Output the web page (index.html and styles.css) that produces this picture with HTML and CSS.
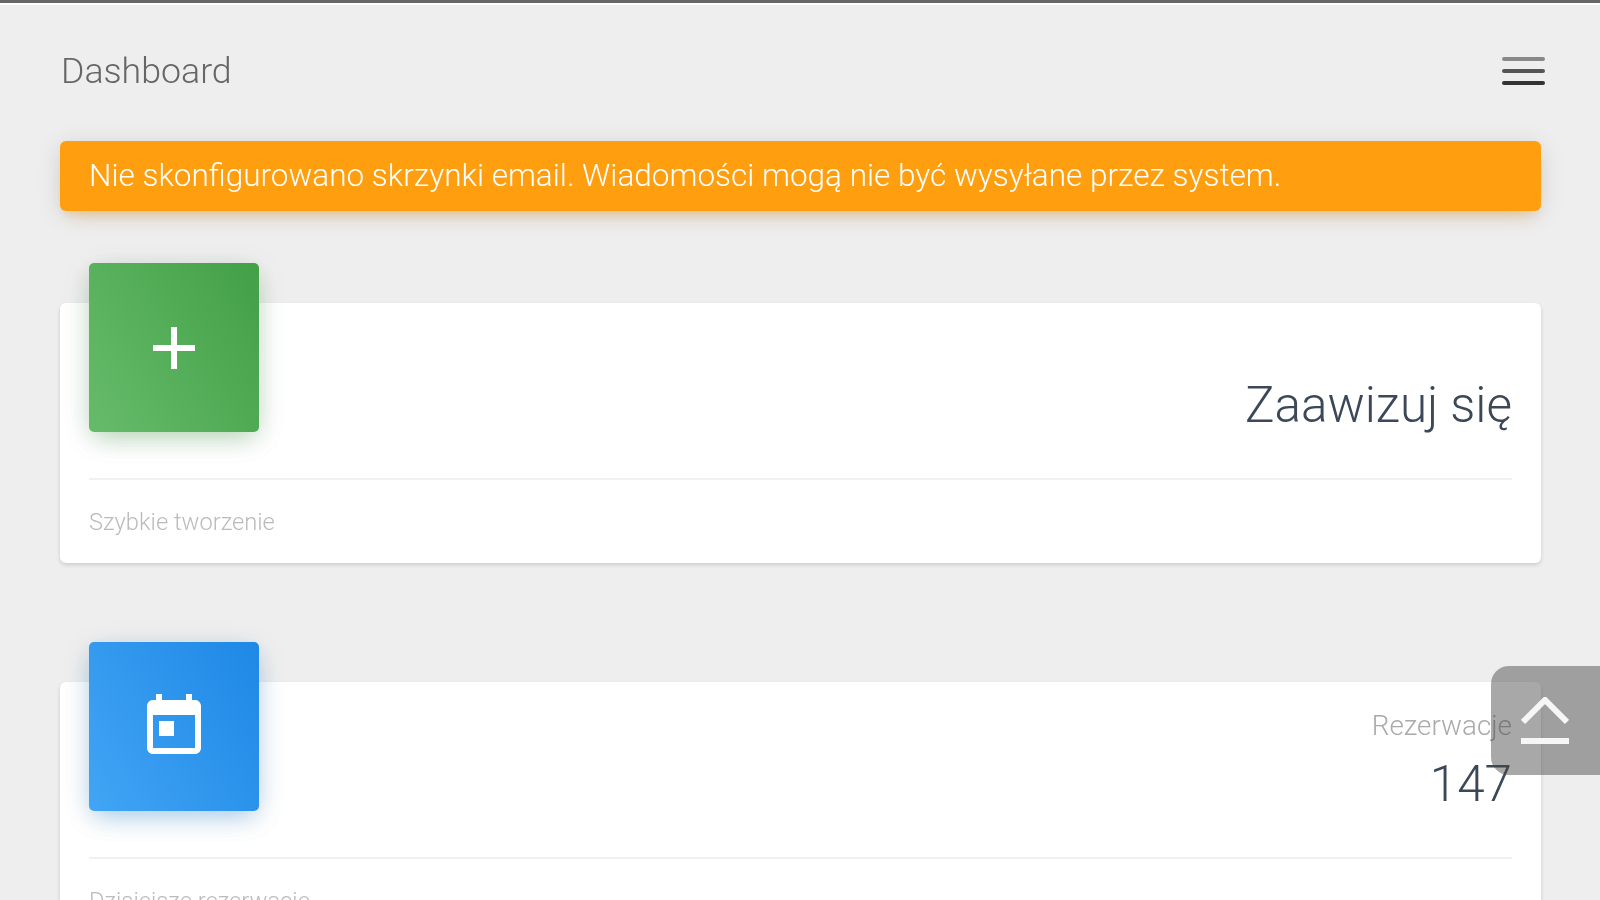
FILE: index.html
```html
<!DOCTYPE html>
<html lang="pl">
<head>
  <meta charset="UTF-8" />
  <meta name="viewport" content="width=device-width, initial-scale=1.0"/>
  <title>Dashboard</title>
  <link rel="stylesheet" href="styles.css">
</head>
<body>
  <div class="top-line"></div>

  <header class="navbar">
    <span class="navbar-title">Dashboard</span>
    <button class="menu-toggle" aria-label="Menu">
      <span></span>
      <span></span>
      <span></span>
    </button>
  </header>

  <main class="content">
    <div class="alert">Nie skonfigurowano skrzynki email. Wiadomości mogą nie być wysyłane przez system.</div>

    <section class="card">
      <div class="card-header">
        <div class="card-icon green">
          <svg viewBox="0 0 24 24"><path d="M19 13h-6v6h-2v-6H5v-2h6V5h2v6h6v2z"/></svg>
        </div>
        <p class="card-category"></p>
        <h3 class="card-title">Zaawizuj się</h3>
      </div>
      <div class="card-footer">Szybkie tworzenie</div>
    </section>

    <section class="card">
      <div class="card-header">
        <div class="card-icon blue">
          <svg viewBox="0 0 24 24"><path d="M19 3h-1V1h-2v2H8V1H6v2H5c-1.11 0-1.99.9-1.99 2L3 19c0 1.1.89 2 2 2h14c1.1 0 2-.9 2-2V5c0-1.1-.9-2-2-2zm0 16H5V8h14v11zM7 10h5v5H7z"/></svg>
        </div>
        <p class="card-category">Rezerwacje</p>
        <h3 class="card-title">147</h3>
      </div>
      <div class="card-footer">Dzisiejsze rezerwacje</div>
    </section>
  </main>

  <button class="scroll-top" aria-label="Do góry">
    <svg viewBox="0 0 48 48"><path d="M2 25 24 3l22 22" /><path d="M0 44h48" /></svg>
  </button>
</body>
</html>
```

FILE: styles.css
```css
html, body {
  margin: 0;
  padding: 0;
  height: 100%;
  overflow: hidden;
}

body {
  font-family: Roboto, "Liberation Sans", sans-serif;
  font-weight: 300;
  background-color: #eeeeee;
  color: #3c4858;
  filter: blur(.7px);
}

.top-line {
  height: 3px;
  background-color: #666;
  border-bottom: 2px solid #fff;
}

.navbar {
  display: flex;
  justify-content: space-between;
  align-items: center;
  height: 130px;
  padding: 2px 55px 0 61px;
  box-sizing: border-box;
}

.navbar-title {
  font-size: 35.7px;
  color: #666;
}

.menu-toggle {
  display: flex;
  flex-direction: column;
  gap: 8px;
  padding: 0;
  border: none;
  background: transparent;
}

.menu-toggle span {
  display: block;
  width: 43px;
  height: 4px;
  border-radius: 2px;
  background-color: #555;
}

.menu-toggle span:first-child {
  background-color: #888;
}

.menu-toggle span:last-child {
  background-color: #333;
}

.content {
  padding: 6px 59px 0 60px;
}

.alert {
  height: 70px;
  line-height: 69px;
  padding: 0 29px;
  border-radius: 6px;
  font-size: 31.5px;
  font-weight: 300;
  color: #fff;
  background-color: #ff9f10;
  box-shadow: 0 12px 20px -10px rgba(255, 152, 0, .28), 0 4px 24px 0 rgba(0, 0, 0, .12), 0 7px 8px -5px rgba(255, 152, 0, .2);
}

.card {
  margin: 92px 0 119px;
  border-radius: 6px;
  background-color: #fff;
  box-shadow: 0 2px 4px 0 rgba(0, 0, 0, .14);
}

.card-header {
  height: 177px;
  margin: 0 29px;
  text-align: right;
  border-bottom: 2px solid #f1f1f1;
  box-sizing: border-box;
}

.card-icon {
  float: left;
  display: flex;
  justify-content: center;
  align-items: center;
  width: 170px;
  height: 169px;
  margin-top: -40px;
  border-radius: 5px;
}

.card-icon svg {
  width: 72px;
  height: 72px;
  fill: #fff;
}

.card-icon.green {
  background: linear-gradient(60deg, #66bb6a, #43a047);
  box-shadow: 0 8px 24px -6px rgba(76, 175, 80, .4), 0 6px 30px 0 rgba(0, 0, 0, .1);
}

.card-icon.blue {
  background: linear-gradient(60deg, #42a5f5, #1e88e5);
  box-shadow: 0 8px 24px -6px rgba(33, 150, 243, .4), 0 6px 30px 0 rgba(0, 0, 0, .1);
}

.card-category {
  height: 74px;
  margin: 0;
  padding-top: 28px;
  box-sizing: border-box;
  font-size: 27.8px;
  line-height: 32px;
  color: #aaa;
}

.card-title {
  margin: 0;
  font-size: 49.4px;
  font-weight: 300;
  line-height: 56px;
  color: #3c4858;
}

.card-footer {
  height: 83px;
  line-height: 84px;
  margin: 0 29px;
  font-size: 23.7px;
  color: #bbb;
}

.scroll-top {
  position: fixed;
  top: 666px;
  right: 0;
  width: 109px;
  height: 109px;
  padding: 0;
  border: none;
  border-radius: 18px 0 0 18px;
  background-color: rgba(70, 70, 70, .47);
}

.scroll-top svg {
  display: block;
  width: 48px;
  height: 48px;
  margin: 0 0 0 30px;
  fill: none;
  stroke: #fff;
  stroke-width: 6;
  opacity: .9;
}
```
